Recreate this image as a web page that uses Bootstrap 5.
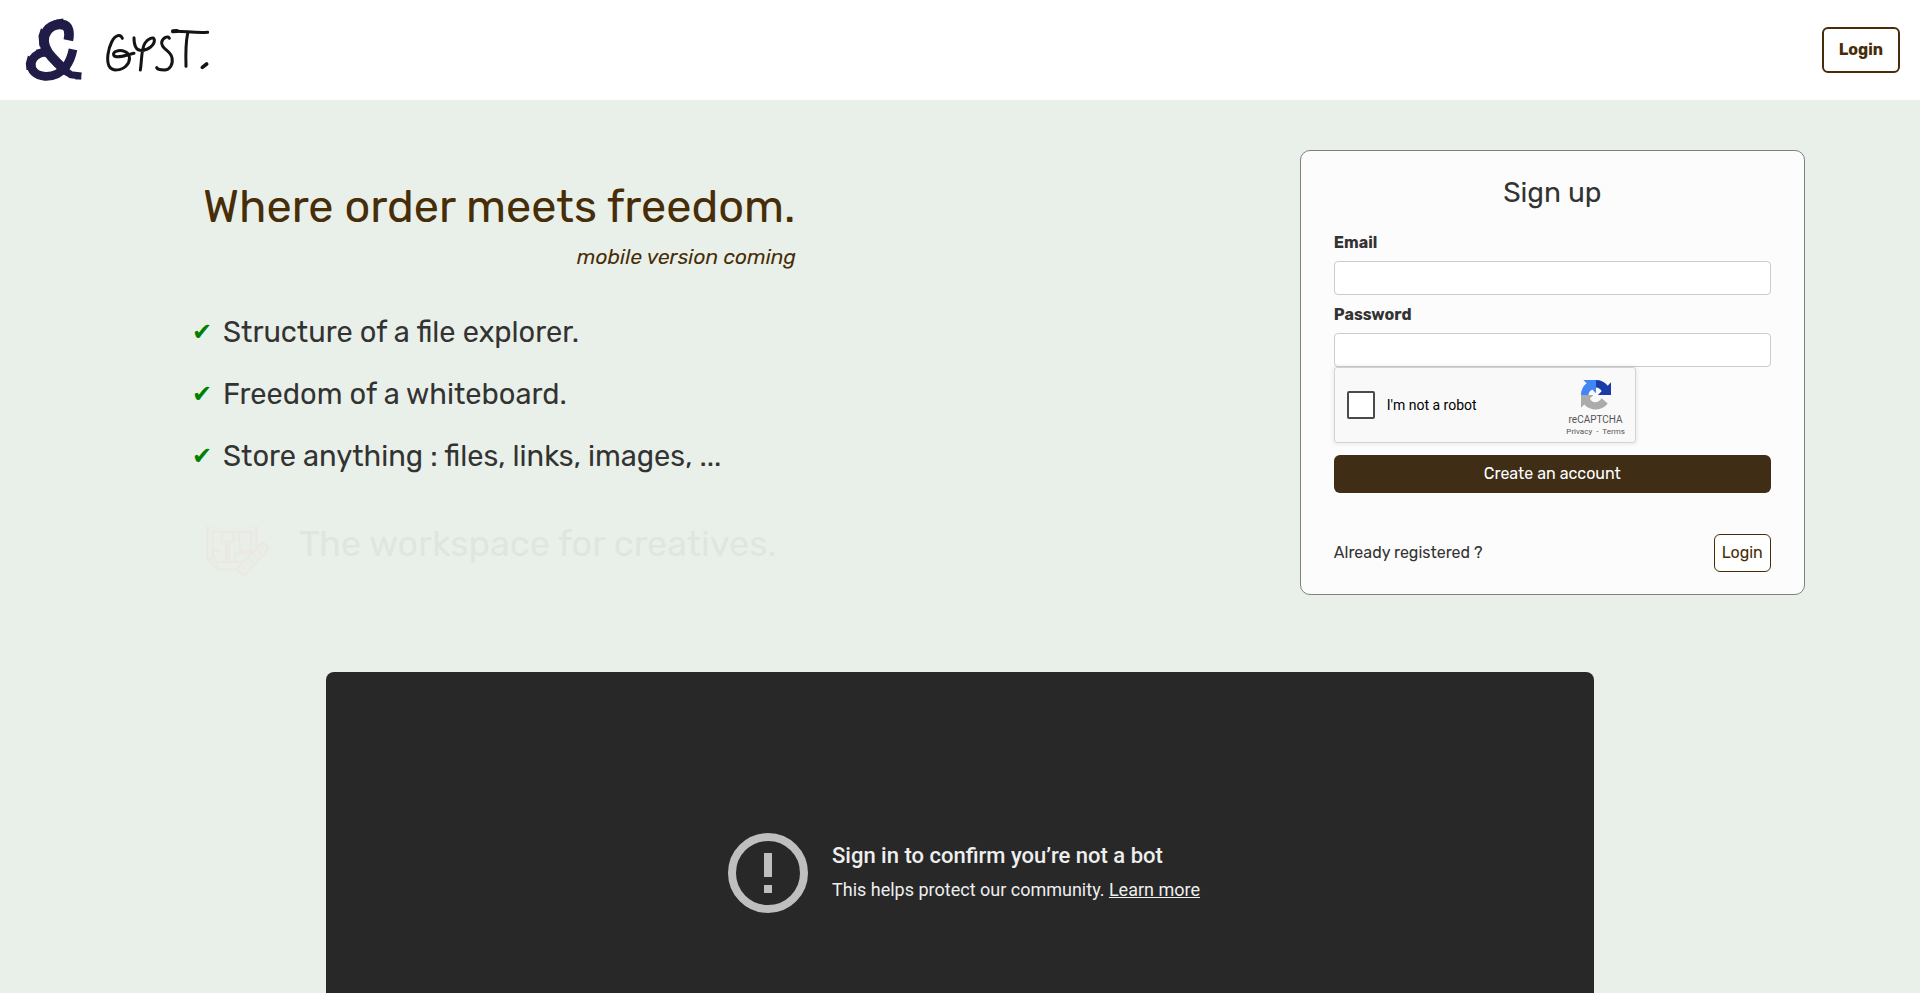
<!DOCTYPE html>
<html lang="en">
<head>
<meta charset="utf-8">
<meta name="viewport" content="width=device-width, initial-scale=1">
<title>GYST</title>
<link href="https://cdn.jsdelivr.net/npm/bootstrap@5.3.0/dist/css/bootstrap.min.css" rel="stylesheet">
<style>
  :root { --brown: #472d08; --ink: #333333; }
  body { font-family: Rubik, Roboto, "Liberation Sans", sans-serif; background: #e9f0e9; color: var(--ink); }
  .page { height: 100vh; }
  .topbar { height: 100px; padding: 0 20px 0 24px; }
  .logo-mark { width: 60px; height: 66px; }
  .logo-name { width: 108px; height: 44px; margin-left: 20px; }
  .btn-outline-brown { color: var(--brown); background: #fff; border: 1px solid var(--brown); }
  .btn-outline-brown:hover { color: #fff; background: var(--brown); }
  .login-top { border-width: 2px; padding: 9px 15px; line-height: 24px; }
  .btn-brown, .btn-brown:hover { background: #3f2d15; color: #fff; }
  .hero { padding: 50px 6% 77px 10%; }
  .pitch { padding-top: 29px; }
  .tagline { width: 604px; padding-left: 11px; color: var(--brown); }
  .tagline h1 { font-size: 45px; line-height: 56px; margin: 0; }
  .tagline p { font-size: 21px; line-height: 28px; margin: 8px 0 0; }
  .features { margin: 43px 0 0; }
  .features li { font-size: 29px; line-height: 36px; margin-bottom: 26px; display: flex; align-items: center; gap: 8px; }
  .features .tick { color: green; font-size: 24px; width: 23px; font-family: "DejaVu Sans", sans-serif; }
  .creatives { margin: 48px 0 0 14px; opacity: .05; font-size: 36px; line-height: 44px; gap: 30px; }
  .creatives svg { width: 63px; height: 50px; margin-top: 4px; }
  .signup { width: 505px; padding: 24px 33px 22px; background: #fcfcfc; border: 1px solid gray; border-radius: 10px; }
  .signup h2 { font-size: 28px; line-height: 36px; margin: 0 0 20px; }
  .signup label.field { display: block; font-weight: 700; line-height: 24px; margin-bottom: 6px; }
  .signup .form-control { height: 34px; border-color: #ccc; border-radius: 4px; }
  .signup .create { margin-top: 12px; }
  .signup .already { margin-top: 41px; }
  .signup .already .btn { padding-left: 7px; padding-right: 7px; }
  .captcha { width: 302px; height: 76px; background: #f9f9f9; border: 1px solid #d3d3d3; border-radius: 3px; box-shadow: 0 0 4px 1px rgba(0,0,0,.08); padding: 0 10px 0 12px; font-family: Roboto, sans-serif; color: #000; }
  .captcha input { appearance: none; width: 28px; height: 28px; border: 2px solid #4a4a4a; border-radius: 2px; background: #fff; margin: 0; }
  .captcha label { font-size: 14px; margin-left: 12px; }
  .brand { font-size: 10px; line-height: 12px; color: #555; text-align: center; padding-top: 7px; }
  .brand svg { width: 30px; height: 30px; display: block; margin: 0 auto 4px; }
  .terms { font-size: 8px; line-height: 12px; }
  .terms a { color: #555; text-decoration: none; }
  .video { width: 66%; background: #282828; border-radius: 8px 8px 0 0; padding: 161px 0 0 8px; color: #eee; font-family: Roboto, sans-serif; }
  .video svg { width: 80px; height: 80px; }
  .video h3 { font-size: 22px; line-height: 28px; font-weight: 500; margin: 9px 0 6px; }
  .video p { font-size: 18px; line-height: 28px; margin: 0; }
  .video a { color: #eee; }
</style>
</head>
<body>
<div class="page d-flex flex-column overflow-hidden">
  <header class="topbar bg-white d-flex align-items-center flex-shrink-0">
    <a href="#" class="d-flex align-items-center" aria-label="GYST">
      <svg class="logo-mark" viewBox="72 51 180 198" fill="none" stroke="#1f1c48" stroke-linecap="butt" stroke-linejoin="round">
        <path stroke-width="29" d="M205 121C210 98 207 76 187 74C166 70 141 82 134 107C127 132 137 151 156 172C174 192 189 208 205 215"/>
        <path stroke-width="26" d="M149 160C126 151 98 166 94 190C92 211 107 227 135 229C158 230 181 221 198 199C211 182 215 168 219 148"/>
        <path stroke-width="21" d="M192 209L212 224L244 228"/>
        <path stroke-width="5" d="M121 139L118 108L125 86M152 69L171 61L190 58M82 210L80 190L86 168M226 236L244 235M119 150L108 152"/>
      </svg>
      <svg class="logo-name" viewBox="312 82 324 132" fill="none" stroke="#141414" stroke-width="9" stroke-linecap="round" stroke-linejoin="round">
        <path d="M367 113C362 99 346 102 335 124C324 146 319 178 327 196C336 213 364 210 378 196C392 182 393 160 375 153C358 146 337 152 341 163C347 176 382 162 402 158"/>
        <path d="M402 111C402 128 406 147 421 149C443 151 465 133 463 117C461 106 444 114 435 127C423 146 426 178 421 208"/>
        <path d="M508 113C505 104 488 110 485 125C483 145 512 150 516 171C520 192 509 208 493 208C481 208 472 206 470 201"/>
        <path d="M519 92C551 90 581 98 623 95M563 98C556 130 557 164 558 197"/>
        <path stroke-width="12" d="M519 92L531 91"/>
        <path stroke-width="11" d="M607 200L620 190"/>
      </svg>
    </a>
    <button type="button" class="btn btn-outline-brown login-top fw-bold ms-auto">Login</button>
  </header>

  <main class="d-flex flex-column flex-grow-1">
    <section class="hero d-flex justify-content-between align-items-start flex-shrink-0">
      <div class="pitch">
        <div class="tagline">
          <h1 class="fw-normal text-nowrap">Where order meets freedom.</h1>
          <p class="fst-italic text-end">mobile version coming</p>
        </div>
        <ul class="features list-unstyled">
          <li><span class="tick">✔</span>Structure of a file explorer.</li>
          <li><span class="tick">✔</span>Freedom of a whiteboard.</li>
          <li><span class="tick">✔</span>Store anything : files, links, images, ...</li>
        </ul>
        <div class="creatives d-flex align-items-start">
          <svg viewBox="0 0 187 150" fill="none" stroke="#ff6a5a" stroke-width="6" stroke-linejoin="round">
            <path d="M3 0V102L35 130H112L150 92V0" fill="#ffa8a0" fill-opacity=".2"/>
            <path d="M3 102L28 94L35 130M19 98V17H134V88M19 74H46M47 17V46H82V17M47 46H68V106M97 17V46M60 46V106M101 46V74H134M132 88V82H86V106M36 108H106"/>
            <path d="M95 126L165 54Q171 48 178 55L184 61Q189 67 183 73L118 143Q111 149 105 143L96 136Q91 131 95 126Z" fill="#f0d8d0"/>
            <path d="M110 124L116 130M122 112L128 118M134 100L140 106M146 88L152 94M158 76L164 82M168 64L174 70"/>
          </svg>
          <span>The workspace for creatives.</span>
        </div>
      </div>

      <form class="signup">
        <h2 class="fw-normal text-center">Sign up</h2>
        <label class="field" for="email">Email</label>
        <input class="form-control mb-2" type="email" id="email">
        <label class="field" for="password">Password</label>
        <input class="form-control" type="password" id="password">
        <div class="captcha d-flex align-items-center">
          <input type="checkbox" id="robot">
          <label for="robot">I'm not a robot</label>
          <div class="brand ms-auto">
            <svg viewBox="0 0 64 64">
              <path fill="#1c3aa9" d="M64 32V5l-7 7A32 32 0 0 0 32 0V16c6 0 10 4 12 8l-8 8z"/>
              <path fill="#4285f4" d="M32 0H5l7 7A32 32 0 0 0 0 32H16c0-6 4-10 8-12l8 8z"/>
              <path fill="#ababab" d="M0 32V59l7-7A32 32 0 0 0 57 50l-13-11C36 52 22 49 19 39l8-7z"/>
            </svg>
            reCAPTCHA
            <div class="terms"><a href="#">Privacy</a>&nbsp; - &nbsp;<a href="#">Terms</a></div>
          </div>
        </div>
        <button type="submit" class="btn btn-brown w-100 create">Create an account</button>
        <div class="d-flex align-items-center justify-content-between already">
          <span>Already registered ?</span>
          <button type="button" class="btn btn-outline-brown">Login</button>
        </div>
      </form>
    </section>

    <section class="video mx-auto flex-grow-1">
      <div class="d-flex justify-content-center gap-4">
        <svg viewBox="0 0 80 80" fill="#bfbfbf"><circle cx="40" cy="40" r="36" fill="none" stroke="#bfbfbf" stroke-width="8"/><path d="M36 20h8v24h-8zM36 52h8v8h-8z"/></svg>
        <div>
          <h3>Sign in to confirm you’re not a bot</h3>
          <p>This helps protect our community. <a href="#">Learn more</a></p>
        </div>
      </div>
    </section>
  </main>
</div>
<script src="https://cdn.jsdelivr.net/npm/bootstrap@5.3.0/dist/js/bootstrap.bundle.min.js"></script>
</body>
</html>
